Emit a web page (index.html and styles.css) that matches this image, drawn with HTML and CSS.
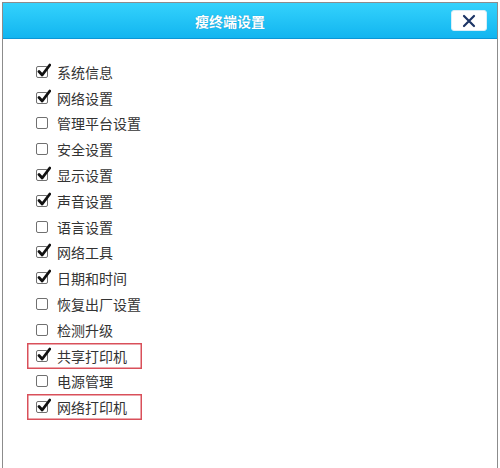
FILE: index.html
```html
<html lang="zh-CN">
<head>
    <meta charset="UTF-8">
    <title>瘦终端设置</title>
    <link rel="stylesheet" href="styles.css">
</head>
<body>
    <!-- Settings dialog -->
    <div class="dialog">
        <div class="dialog-header">
            <h1 class="dialog-title">瘦终端设置</h1>
            <button class="close-btn" aria-label="关闭">
                <svg width="14" height="14" viewBox="0 0 14 14"><path d="M2 2 L12 12 M12 2 L2 12" stroke="#1d3566" stroke-width="2.2" stroke-linecap="round"/></svg>
            </button>
        </div>

        <ul class="option-list">
            <li class="option checked"><span class="box"></span>系统信息</li>
            <li class="option checked"><span class="box"></span>网络设置</li>
            <li class="option"><span class="box"></span>管理平台设置</li>
            <li class="option"><span class="box"></span>安全设置</li>
            <li class="option checked"><span class="box"></span>显示设置</li>
            <li class="option checked"><span class="box"></span>声音设置</li>
            <li class="option"><span class="box"></span>语言设置</li>
            <li class="option checked"><span class="box"></span>网络工具</li>
            <li class="option checked"><span class="box"></span>日期和时间</li>
            <li class="option"><span class="box"></span>恢复出厂设置</li>
            <li class="option"><span class="box"></span>检测升级</li>
            <li class="option checked marked"><span class="box"></span>共享打印机</li>
            <li class="option"><span class="box"></span>电源管理</li>
            <li class="option checked marked"><span class="box"></span>网络打印机</li>
        </ul>
    </div>
</body>
</html>
```

FILE: styles.css
```css
/* General */
body {
    margin: 0;
    background-color: #fff;
    font-family: "Noto Sans CJK SC", "Noto Sans", sans-serif;
    color: #333;
    overflow: hidden;
}

/* Dialog frame */
.dialog {
    margin: 2px 2px 0 2px;
    height: 480px;
    border: 1px solid #8c8c8c;
    border-bottom: none;
    background-color: #fff;
}

.dialog-header {
    display: flex;
    align-items: center;
    height: 35px;
    padding: 0 10px 0 6px;
    background: linear-gradient(#34d2fc, #12b5f0);
    border-bottom: 1px solid #0b96d6;
}

.dialog-title {
    flex: 1;
    margin: 0;
    text-align: center;
    font-size: 14px;
    font-weight: bold;
    color: #fff;
    text-shadow: 0 0 1px rgba(0, 60, 120, 0.4);
}

.close-btn {
    width: 36px;
    height: 21px;
    padding: 0;
    border: 1px solid #d8eef8;
    border-radius: 3px;
    background-color: #fff;
    display: flex;
    align-items: center;
    justify-content: center;
}

/* Option list */
.option-list {
    list-style: none;
    margin: 0;
    padding: 20px 0 0 24px;
}

.option {
    display: flex;
    align-items: center;
    width: fit-content;
    height: 25.8px;
    padding: 0 15px 0 9px;
    font-size: 14px;
    line-height: 1;
}

.option .box {
    position: relative;
    width: 10px;
    height: 10px;
    margin-right: 9px;
    border: 1px solid #707070;
    border-radius: 2px;
    flex-shrink: 0;
}

/* tick drawn over the box, poking out at the top right */
.option.checked .box::after {
    content: "";
    position: absolute;
    left: 0;
    top: -4px;
    width: 14px;
    height: 14px;
    background: url("data:image/svg+xml;utf8,<svg xmlns='http://www.w3.org/2000/svg' width='14' height='14' viewBox='0 0 14 14'><path d='M2 8.5 L5.2 12 L12.8 2' fill='none' stroke='%23111' stroke-width='2.8' stroke-linejoin='round' stroke-linecap='round'/></svg>") no-repeat;
}

.option.marked {
    box-shadow: inset 0 0 0 1.5px #d9505a;
}
```
